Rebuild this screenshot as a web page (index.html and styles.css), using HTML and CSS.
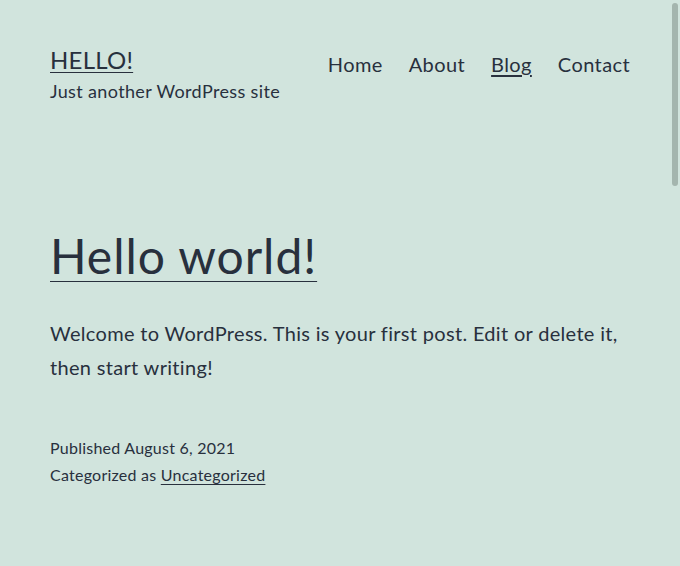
FILE: index.html
```html
<!DOCTYPE html>
<html lang="en">
<head>
<meta charset="utf-8">
<title>HELLO! – Just another WordPress site</title>
<link rel="stylesheet" href="styles.css">
</head>
<body>
<div class="site">
  <header class="site-header">
    <div class="branding">
      <p class="site-title"><a href="#">HELLO!</a></p>
      <p class="site-description">Just another WordPress site</p>
    </div>
    <nav class="primary-nav">
      <a href="#">Home</a>
      <a href="#">About</a>
      <a href="#" class="current">Blog</a>
      <a href="#">Contact</a>
    </nav>
  </header>
  <main class="site-main">
    <article class="post">
      <h2 class="entry-title"><a href="#">Hello world!</a></h2>
      <div class="entry-content">
        <p>Welcome to WordPress. This is your first post. Edit or delete it, then start writing!</p>
      </div>
      <footer class="entry-footer">
        <div class="posted-on">Published <time>August 6, 2021</time></div>
        <div class="cat-links">Categorized as <a href="#">Uncategorized</a></div>
      </footer>
    </article>
  </main>
</div>
<div class="scroll-thumb"></div>
</body>
</html>
```
FILE: styles.css
```css
html, body {
  margin: 0;
  padding: 0;
  height: 100%;
  overflow: hidden;
}
body {
  background: #d1e4dd;
  color: #28303d;
  font-family: Lato, "Noto Sans", sans-serif;
  letter-spacing: 0.015em;
}
a { color: #28303d; }
.site {
  padding: 0 50px;
}
.site-header {
  display: flex;
  justify-content: space-between;
  align-items: flex-start;
  padding-top: 44px;
}
.site-title {
  margin: 0;
  font-size: 24px;
  line-height: 31px;
}
.site-title a {
  text-decoration-thickness: 1px;
  text-underline-offset: 3px;
}
.site-description {
  margin: 4px 0 0;
  font-size: 18px;
  line-height: 25px;
  letter-spacing: 0.02em;
}
.primary-nav {
  display: flex;
  gap: 26px;
  font-size: 20px;
  line-height: 40px;
  letter-spacing: 0.02em;
}
.primary-nav a {
  text-decoration: none;
}
.primary-nav a.current {
  text-decoration: underline;
  text-decoration-thickness: 2px;
  text-underline-offset: 3px;
}
.site-main {
  padding-top: 121px;
}
.entry-title {
  margin: 0;
  font-size: 48px;
  font-weight: normal;
  line-height: 62px;
  letter-spacing: 0.02em;
}
.entry-title a {
  text-decoration-thickness: 1px;
  text-underline-offset: 7px;
}
.entry-content p {
  margin: 29px 0 0;
  font-size: 20px;
  line-height: 34px;
  letter-spacing: 0.016em;
}
.entry-footer {
  margin-top: 50px;
  font-size: 16px;
  line-height: 27px;
}
.entry-footer a {
  text-decoration-thickness: 1px;
  text-underline-offset: 3px;
}
.scroll-thumb {
  position: fixed;
  top: 3px;
  right: 2px;
  width: 6px;
  height: 183px;
  border-radius: 3px;
  background: #a4b5ae;
}
```
